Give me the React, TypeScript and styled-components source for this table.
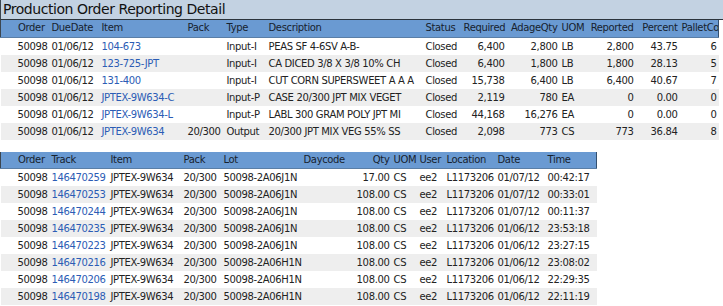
import React from 'react';
import styled, { createGlobalStyle } from 'styled-components';

const GlobalStyle = createGlobalStyle`
  html, body {
    margin: 0;
    padding: 0;
    background: #ffffff;
  }
  body {
    font-family: 'DejaVu Sans', Verdana, sans-serif;
    font-size: 10px;
    letter-spacing: -0.35px;
    color: #222222;
  }
`;

interface Column {
  label: string;
  width: number;
  align?: 'left' | 'right';
  indent?: number;
}

const Page = styled.div`
  width: 723px;
  height: 306px;
  overflow: hidden;
  display: flex;
  flex-direction: column;
  align-items: flex-start;
`;

const TitleBar = styled.div`
  box-sizing: border-box;
  width: 100%;
  height: 20px;
  padding-left: 2px;
  background: #c3d2e2;
  border-left: 1px solid #3c4650;
  border-bottom: 1px solid #2c343c;
  font-size: 14px;
  letter-spacing: -0.45px;
  line-height: 19px;
  color: #111111;
  white-space: nowrap;
`;

const Grid = styled.table<{ $gap?: number; $width: number }>`
  border-collapse: collapse;
  table-layout: fixed;
  width: ${({ $width }) => $width}px;
  margin-top: ${({ $gap }) => $gap ?? 0}px;
`;

const Col = styled.col<{ $w: number }>`
  width: ${({ $w }) => $w}px;
`;

const HeadRow = styled.tr`
  background: #6a9ad2;
`;

const HeadCell = styled.th<{ $align?: string; $indent?: number; $first?: boolean; $last?: boolean }>`
  box-sizing: border-box;
  height: 17px;
  padding: 0 2px 0 ${({ $indent }) => 2 + ($indent ?? 0)}px;
  font-weight: normal;
  text-align: ${({ $align }) => $align ?? 'left'};
  color: #17222e;
  white-space: nowrap;
  overflow: hidden;
  line-height: 16px;
  border-bottom: 1px solid #5a7ea6;
  border-left: ${({ $first }) => ($first ? '1px solid #3c4650' : 'none')};
  border-right: ${({ $last }) => ($last ? '1px solid #34506e' : 'none')};
`;

const Row = styled.tr<{ $alt: boolean }>`
  background: ${({ $alt }) => ($alt ? '#eeeeee' : '#ffffff')};
`;

const Cell = styled.td<{ $align?: string; $indent?: number }>`
  box-sizing: border-box;
  height: 17px;
  padding: 0 2px 0 ${({ $indent }) => 2 + ($indent ?? 0)}px;
  text-align: ${({ $align }) => $align ?? 'left'};
  white-space: nowrap;
  overflow: hidden;
  line-height: 17px;
`;

const Link = styled.a`
  color: #2b5cb5;
  text-decoration: none;
`;

const orderCols: Column[] = [
  { label: 'Order', width: 49, indent: 15 },
  { label: 'DueDate', width: 50 },
  { label: 'Item', width: 86 },
  { label: 'Pack', width: 39 },
  { label: 'Type', width: 42 },
  { label: 'Description', width: 157 },
  { label: 'Status', width: 38 },
  { label: 'Required', width: 45, align: 'right' },
  { label: 'AdageQty', width: 53, align: 'right' },
  { label: 'UOM', width: 28 },
  { label: 'Reported', width: 48, align: 'right' },
  { label: 'Percent', width: 44, align: 'right' },
  { label: 'PalletCount', width: 39, align: 'right' },
];

const orderRows = [
  ['50098', '01/06/12', '104-673', '', 'Input-I', 'PEAS SF 4-6SV A-B-', 'Closed', '6,400', '2,800', 'LB', '2,800', '43.75', '6'],
  ['50098', '01/06/12', '123-725-JPT', '', 'Input-I', 'CA DICED 3/8 X 3/8 10% CH', 'Closed', '6,400', '1,800', 'LB', '1,800', '28.13', '5'],
  ['50098', '01/06/12', '131-400', '', 'Input-I', 'CUT CORN SUPERSWEET A A A', 'Closed', '15,738', '6,400', 'LB', '6,400', '40.67', '7'],
  ['50098', '01/06/12', 'JPTEX-9W634-C', '', 'Input-P', 'CASE 20/300 JPT MIX VEGET', 'Closed', '2,119', '780', 'EA', '0', '0.00', '0'],
  ['50098', '01/06/12', 'JPTEX-9W634-L', '', 'Input-P', 'LABL 300 GRAM POLY JPT MI', 'Closed', '44,168', '16,276', 'EA', '0', '0.00', '0'],
  ['50098', '01/06/12', 'JPTEX-9W634', '20/300', 'Output', '20/300 JPT MIX VEG 55% SS', 'Closed', '2,098', '773', 'CS', '773', '36.84', '8'],
];

const trackCols: Column[] = [
  { label: 'Order', width: 49, indent: 15 },
  { label: 'Track', width: 59 },
  { label: 'Item', width: 73 },
  { label: 'Pack', width: 40 },
  { label: 'Lot', width: 80 },
  { label: 'Daycode', width: 48 },
  { label: 'Qty', width: 42, align: 'right' },
  { label: 'UOM', width: 26 },
  { label: 'User', width: 27 },
  { label: 'Location', width: 51 },
  { label: 'Date', width: 50 },
  { label: 'Time', width: 51 },
];

const trackRows = [
  ['146470259', 'J1N', '17.00', '01/07/12', '00:42:17'],
  ['146470253', 'J1N', '108.00', '01/07/12', '00:33:01'],
  ['146470244', 'J1N', '108.00', '01/07/12', '00:11:37'],
  ['146470235', 'J1N', '108.00', '01/06/12', '23:53:18'],
  ['146470223', 'J1N', '108.00', '01/06/12', '23:27:15'],
  ['146470216', 'H1N', '108.00', '01/06/12', '23:08:02'],
  ['146470206', 'H1N', '108.00', '01/06/12', '22:29:35'],
  ['146470198', 'H1N', '108.00', '01/06/12', '22:11:19'],
].map(([track, lot, qty, date, time]) => [
  '50098', track, 'JPTEX-9W634', '20/300', `50098-2A06${lot}`, '', qty, 'CS', 'ee2', 'L1173206', date, time,
]);

interface ReportGridProps {
  columns: Column[];
  rows: string[][];
  linkColumn: number;
  gap?: number;
}

const ReportGrid = ({ columns, rows, linkColumn, gap }: ReportGridProps) => (
  <Grid $gap={gap} $width={columns.reduce((sum, c) => sum + c.width, 0)}>
    <colgroup>
      {columns.map((c) => (
        <Col key={c.label} $w={c.width} />
      ))}
    </colgroup>
    <thead>
      <HeadRow>
        {columns.map((c, i) => (
          <HeadCell
            key={c.label}
            $align={c.align}
            $indent={c.indent}
            $first={i === 0}
            $last={i === columns.length - 1}
          >
            {c.label}
          </HeadCell>
        ))}
      </HeadRow>
    </thead>
    <tbody>
      {rows.map((row, r) => (
        <Row key={r} $alt={r % 2 === 1}>
          {row.map((value, i) => (
            <Cell key={i} $align={columns[i].align} $indent={columns[i].indent}>
              {i === linkColumn ? <Link href="#">{value}</Link> : value}
            </Cell>
          ))}
        </Row>
      ))}
    </tbody>
  </Grid>
);

const App = () => (
  <>
    <GlobalStyle />
    <Page>
      <TitleBar>Production Order Reporting Detail</TitleBar>
      <ReportGrid columns={orderCols} rows={orderRows} linkColumn={2} />
      <ReportGrid columns={trackCols} rows={trackRows} linkColumn={1} gap={12} />
    </Page>
  </>
);

export default App;
